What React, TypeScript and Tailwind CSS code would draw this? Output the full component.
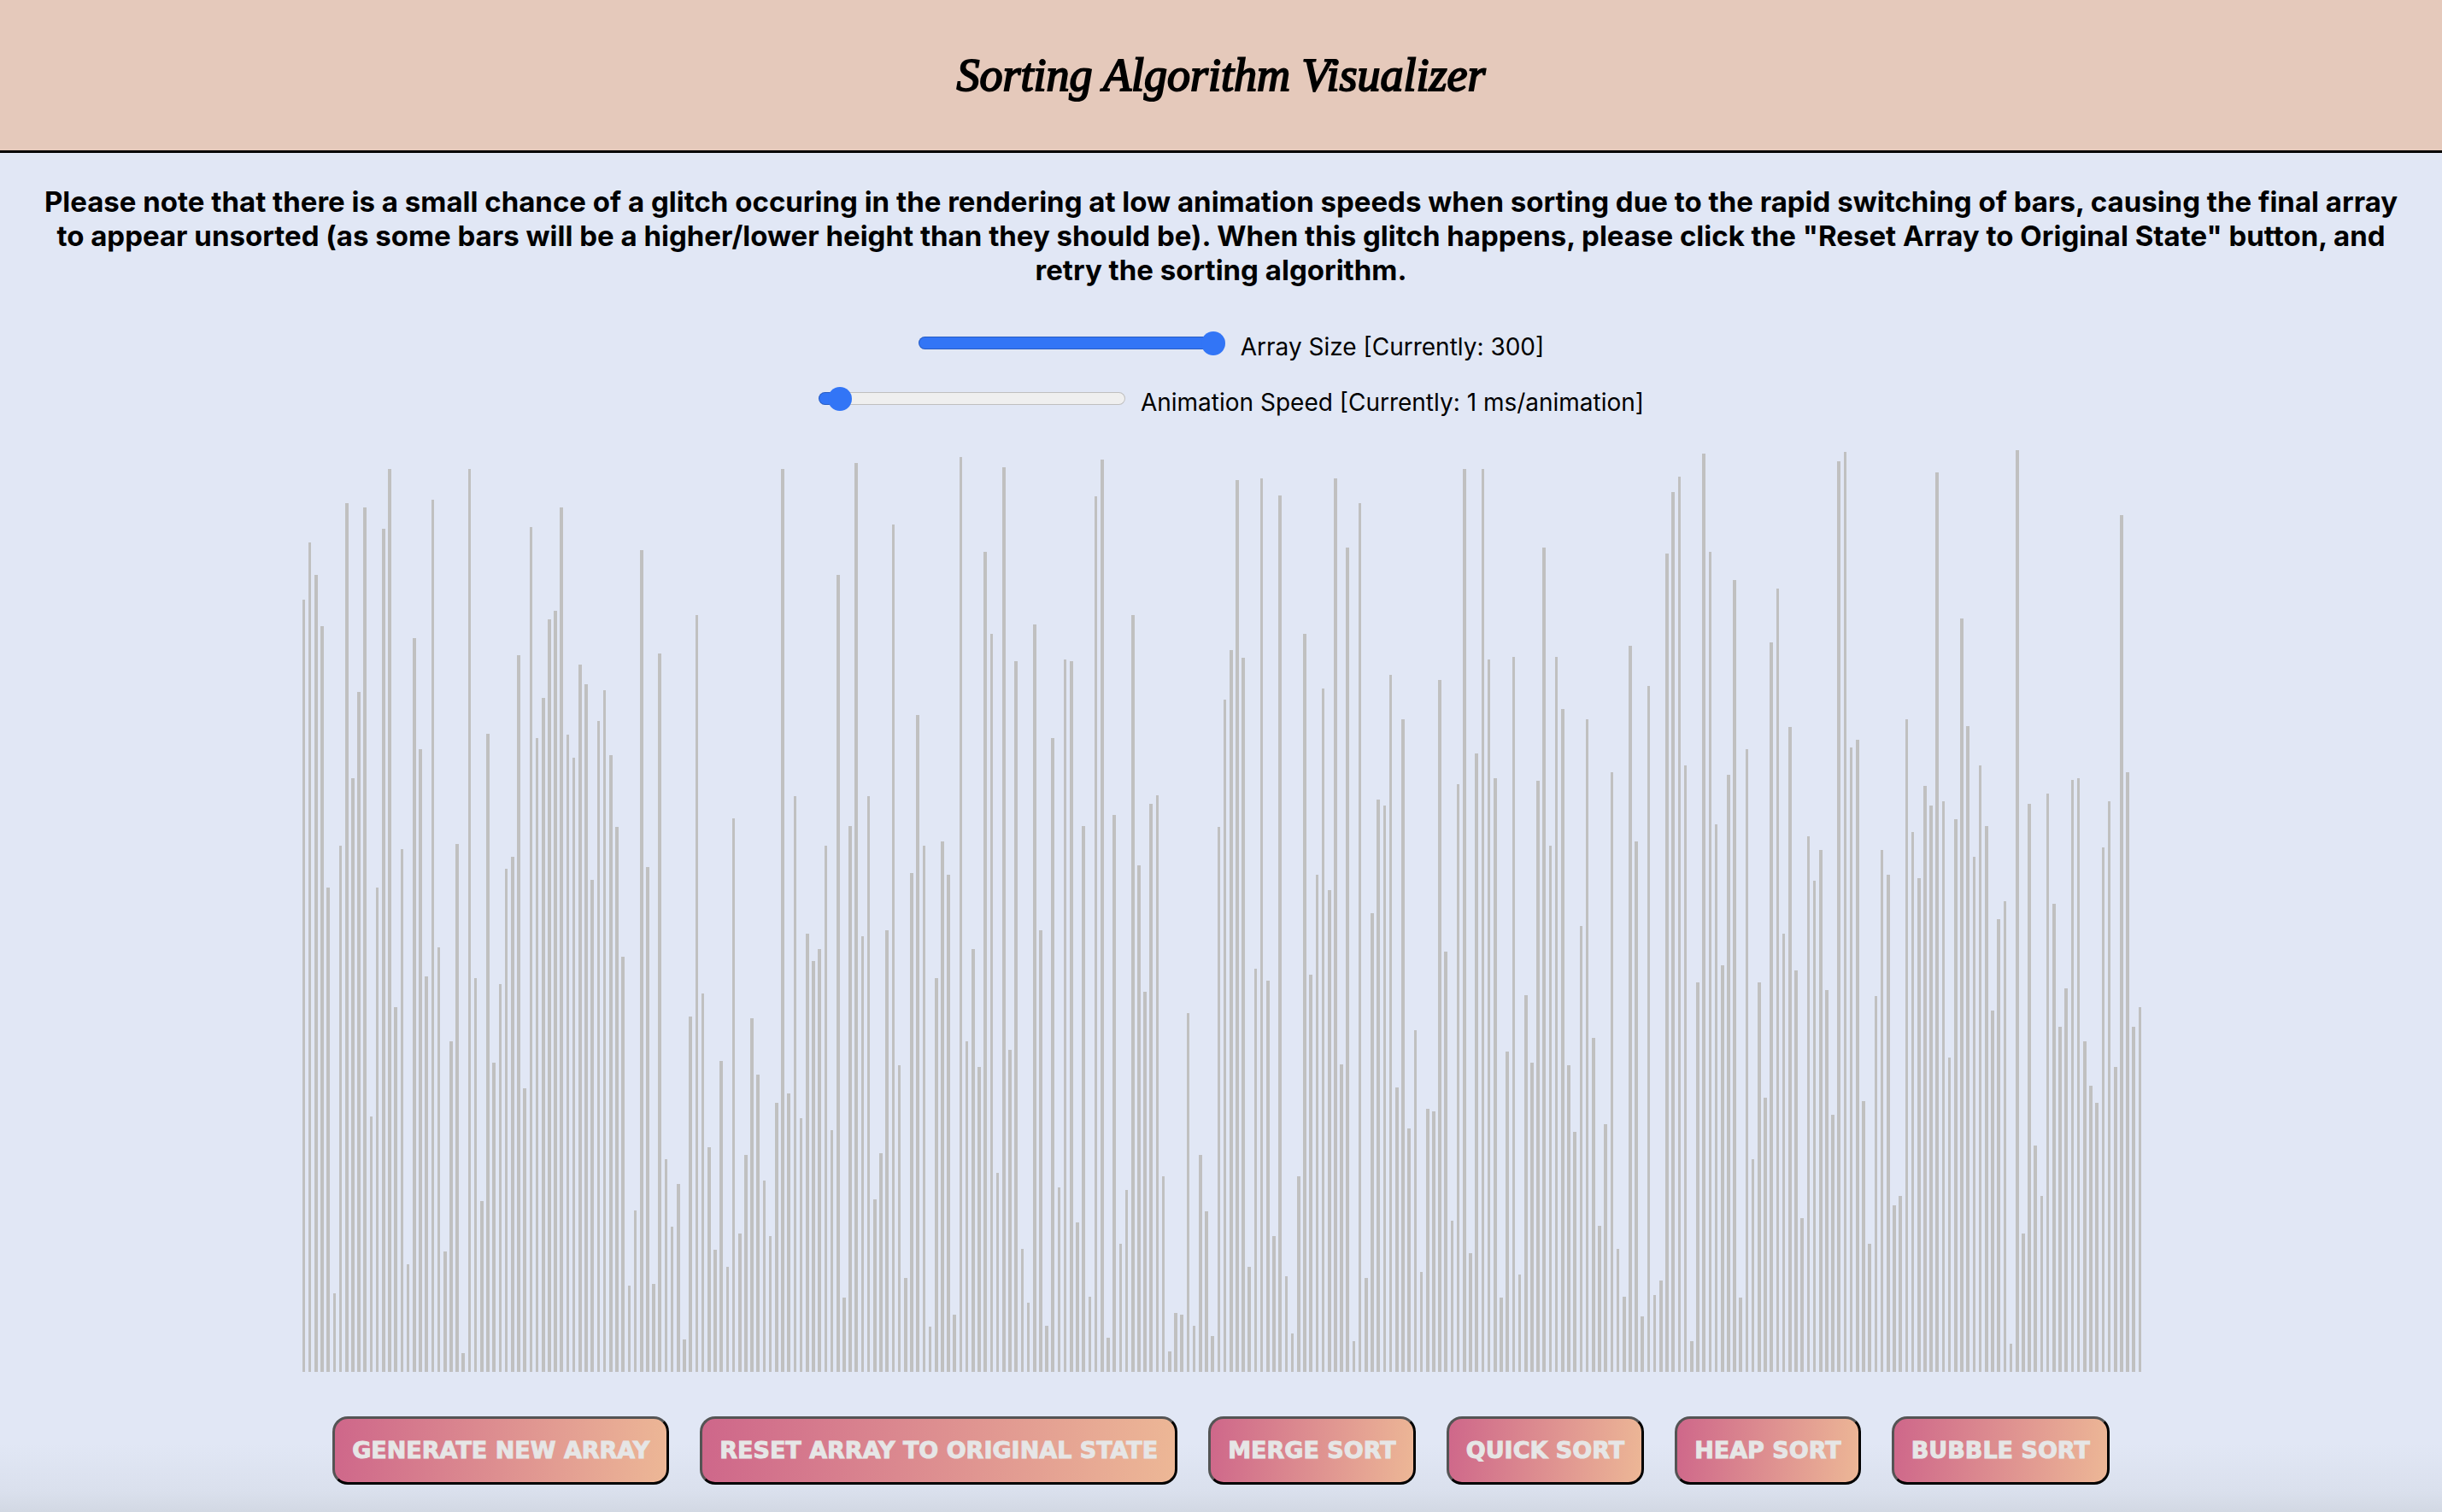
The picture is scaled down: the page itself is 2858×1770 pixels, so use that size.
import React, { useState } from 'react';

const ORIGINAL_VALUES = [
  1277, 1371, 1318, 1233, 801, 130, 870, 1436, 982, 1124, 1429, 422, 801, 1394, 1493, 603, 864, 178, 1213, 1030, 654, 1442, 702, 199, 546,
  873, 31, 1493, 651, 282, 1055, 511, 641, 832, 852, 1185, 469, 1397, 1048, 1114, 1244, 1258, 1429, 1054, 1015, 1169, 1137, 813, 1076, 1127,
  1020, 901, 686, 142, 267, 1359, 835, 145, 1188, 352, 240, 311, 53, 587, 1251, 626, 371, 202, 514, 174, 915, 229, 359, 585, 491,
  316, 224, 445, 1493, 460, 952, 419, 724, 679, 699, 870, 400, 1318, 123, 902, 1503, 720, 952, 285, 361, 730, 1401, 507, 155, 825,
  1086, 870, 75, 651, 877, 822, 94, 1513, 546, 699, 504, 1356, 1220, 329, 1496, 532, 1175, 203, 114, 1236, 730, 76, 1048, 305, 1178,
  1175, 247, 902, 125, 1448, 1508, 56, 921, 212, 301, 1251, 837, 628, 939, 953, 323, 34, 97, 94, 593, 76, 359, 265, 59, 901,
  1112, 1193, 1475, 1181, 174, 667, 1477, 647, 224, 1449, 158, 63, 323, 1220, 657, 822, 1130, 796, 1477, 508, 1363, 51, 1436, 155, 758,
  946, 936, 1152, 470, 1079, 402, 565, 165, 435, 431, 1144, 695, 250, 972, 1493, 196, 1023, 1493, 1178, 982, 123, 530, 1182, 161, 623,
  511, 977, 1363, 870, 1182, 1096, 507, 397, 737, 1079, 552, 241, 409, 991, 203, 125, 1200, 877, 92, 1134, 127, 151, 1353, 1455, 1480,
  1003, 51, 644, 1518, 1356, 905, 672, 987, 1309, 123, 1030, 352, 644, 453, 1206, 1295, 724, 1066, 664, 254, 885, 812, 863, 631, 425,
  1506, 1521, 1032, 1045, 448, 212, 621, 863, 822, 275, 291, 1079, 893, 816, 969, 936, 1487, 943, 520, 914, 1246, 1068, 852, 1003, 902,
  597, 748, 778, 46, 1524, 229, 939, 374, 291, 956, 774, 570, 634, 979, 982, 546, 473, 445, 867, 943, 504, 1417, 991, 570, 603,
];

const MAX_VALUE = 1524;

const ACTIONS = [
  'Generate New Array',
  'Reset Array to Original State',
  'Merge Sort',
  'Quick Sort',
  'Heap Sort',
  'Bubble Sort',
];

type SliderProps = {
  id: string;
  label: string;
  min: number;
  max: number;
  value: number;
  onChange: (value: number) => void;
};

function Slider({ id, label, min, max, value, onChange }: SliderProps) {
  const filled = ((value - min) / (max - min)) * 92 + 4;
  return (
    <div className="flex h-[65px] items-center justify-center gap-[18px] pl-6">
      <input
        id={id}
        type="range"
        min={min}
        max={max}
        value={value}
        onChange={(e) => onChange(Number(e.target.value))}
        style={{
          backgroundImage: `linear-gradient(to right, #3275f6 ${filled}%, #efefef ${filled}%)`,
        }}
        className="h-[15px] w-[359px] appearance-none rounded-full shadow-[inset_0_0_0_1px_rgba(0,0,0,0.2)] [&::-webkit-slider-thumb]:size-7 [&::-webkit-slider-thumb]:appearance-none [&::-webkit-slider-thumb]:rounded-full [&::-webkit-slider-thumb]:bg-[#3275f6]"
      />
      <label htmlFor={id} className="pt-2 text-[28px] leading-8">
        {label}
      </label>
    </div>
  );
}

export default function App() {
  const [size, setSize] = useState(300);
  const [speed, setSpeed] = useState(1);

  return (
    <div className="flex min-h-screen flex-col bg-[#e1e7f5] bg-[linear-gradient(to_top,#d2d8e3,#dae0ed_24px,#e1e7f5_80px)] font-['Inter',sans-serif] text-black">
      <header className="flex h-[179px] items-center justify-center border-b-[3px] border-black bg-[#e5c9bb]">
        <h1 className="font-['Apple_Chancery','Liberation_Serif',serif] text-[54px] leading-[72px] italic [-webkit-text-stroke:2px_black]">
          Sorting Algorithm Visualizer
        </h1>
      </header>

      <main className="flex flex-1 flex-col">
        <p className="px-12 pt-[37px] pb-[33px] text-center text-[33px] leading-10 font-bold">
          Please note that there is a small chance of a glitch occuring in the rendering at low
          animation speeds when sorting due to the rapid switching of bars, causing the final array
          to appear unsorted (as some bars will be a higher/lower height than they should be). When
          this glitch happens, please click the "Reset Array to Original State" button, and retry
          the sorting algorithm.
        </p>

        <Slider
          id="array-size"
          label={`Array Size [Currently: ${size}]`}
          min={5}
          max={300}
          value={size}
          onChange={setSize}
        />
        <Slider
          id="animation-speed"
          label={`Animation Speed [Currently: ${speed} ms/animation]`}
          min={0}
          max={30}
          value={speed}
          onChange={setSpeed}
        />

        <div className="mx-auto mt-7 flex h-[1079px] w-full max-w-[2158px] items-end pr-0.5">
          {ORIGINAL_VALUES.slice(0, size).map((value, i) => (
            <div key={i} className="flex h-full min-w-0 flex-1 items-end justify-end">
              <div
                className="w-1/2 bg-[#c0c0c0]"
                style={{ height: `${(value / MAX_VALUE) * 100}%` }}
              />
            </div>
          ))}
        </div>

        <div className="flex flex-wrap justify-center gap-9 pt-[52px] pb-8">
          {ACTIONS.map((action) => (
            <button
              key={action}
              type="button"
              className="h-20 rounded-[18px] border-[3px] border-t-[#545454] border-r-black border-b-black border-l-[#545454] bg-[linear-gradient(95deg,#ce668a,#edb896)] bg-origin-border px-5 font-['Arial_Black','DejaVu_Sans',sans-serif] text-[27px] leading-10 font-black text-[#e6e6e6] uppercase [-webkit-text-stroke:1px_#e6e6e6]"
            >
              {action}
            </button>
          ))}
        </div>
      </main>
    </div>
  );
}
